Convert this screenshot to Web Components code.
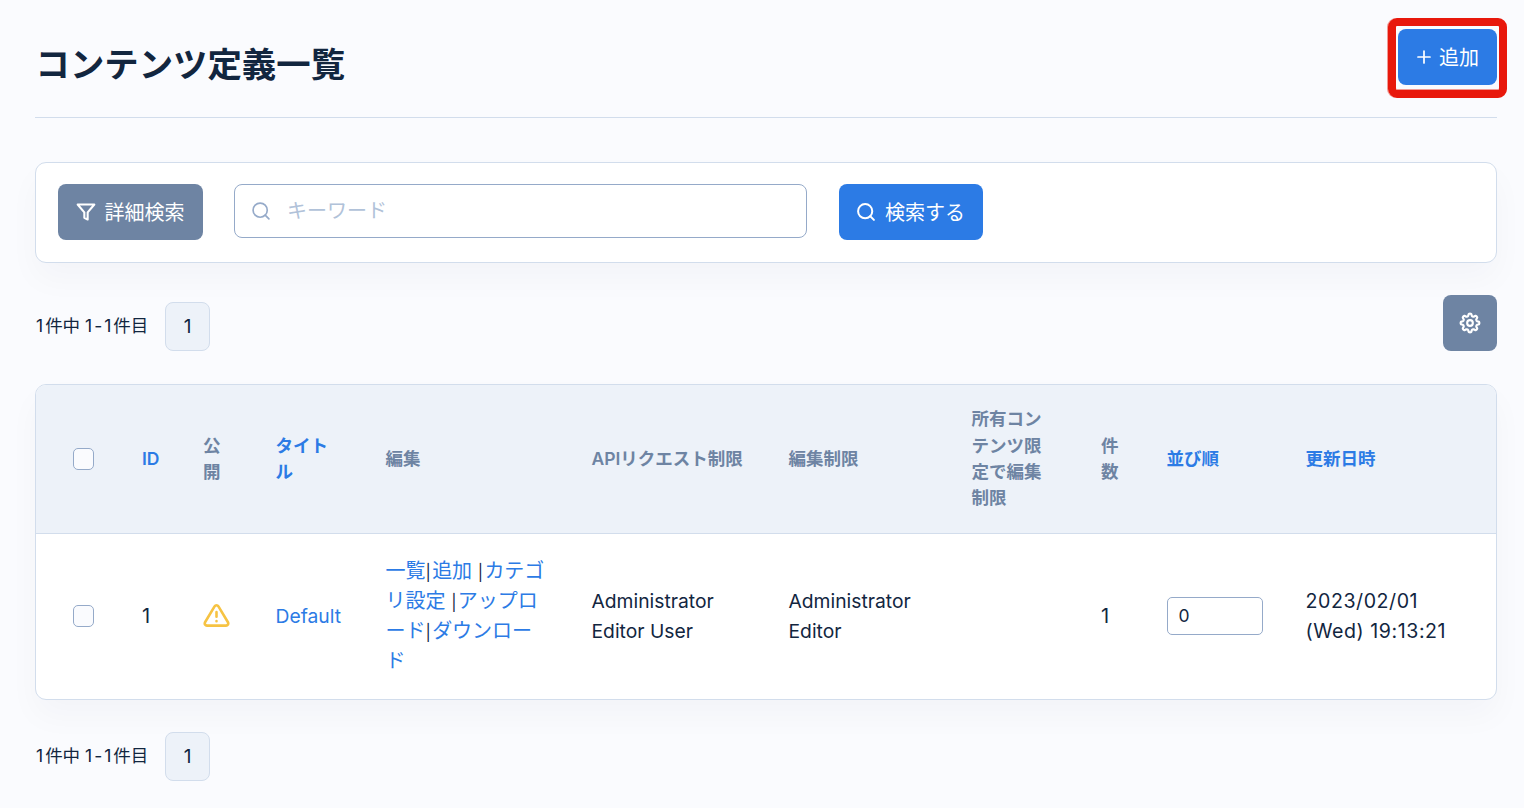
<!DOCTYPE html>
<html lang="ja">
<head>
<meta charset="utf-8">
<title>コンテンツ定義一覧</title>
<style>
  body {
    margin: 0;
    height: 808px;
    overflow: hidden;
    background: #fafbfe;
    color: #12263f;
    font-family: Inter, "Noto Sans CJK JP", sans-serif;
    font-size: 20px;
    line-height: 30px;
    --border: #d2ddec;
    --primary: #2c7be5;
    --secondary: #6e84a3;
  }
</style>
</head>
<body>
<content-list-page></content-list-page>

<script>
// Iconos de linea, todos sobre una caja de 24x24
const icons = {
  plus: '<path d="M12 3v18M3 12h18"/>',
  filter: '<path d="M22 3H2l8 9.46V19l4 2v-8.54z"/>',
  search: '<circle cx="11" cy="11" r="8.5"/><path d="m21.5 21.5-4.5-4.5"/>',
  alert: '<path d="M10.29 3.86 1.82 18a2 2 0 0 0 1.71 3h16.94a2 2 0 0 0 1.71-3L13.71 3.86a2 2 0 0 0-3.42 0zM12 9v4M12 17h.01"/>',
  gear: ''
};

// Contorno del engranaje: ocho dientes redondeados
(function () {
  let d = "";
  for (let i = 0; i <= 96; i++) {
    const a = i / 96 * Math.PI * 2;
    const wave = Math.tanh(2 * Math.cos(a * 8)) / Math.tanh(2);
    const r = 8.9 + 1.3 * wave;
    d += (i ? "L" : "M") + (12 + r * Math.cos(a)).toFixed(2) + " " + (12 + r * Math.sin(a)).toFixed(2);
  }
  icons.gear = `<path d="${d}z"/><circle cx="12" cy="12" r="3.1"/>`;
})();

class UiIcon extends HTMLElement {
  connectedCallback() {
    const size = this.getAttribute("size") || 20;
    const stroke = this.getAttribute("stroke") || 2;
    this.attachShadow({ mode: "open" }).innerHTML = `
      <style>
        :host { display: block; flex: none; width: ${size}px; height: ${size}px; }
        svg { display: block; width: 100%; height: 100%; fill: none; stroke: currentColor; stroke-width: ${stroke}; stroke-linecap: round; stroke-linejoin: round; }
      </style>
      <svg viewBox="0 0 24 24">${icons[this.getAttribute("name")]}</svg>`;
  }
}
customElements.define("ui-icon", UiIcon);

class UiButton extends HTMLElement {
  connectedCallback() {
    this.attachShadow({ mode: "open" }).innerHTML = `
      <style>
        :host { display: block; position: relative; flex: none; width: 144px; }
        button {
          display: flex; align-items: center; justify-content: center; gap: 9px;
          box-sizing: border-box; width: 100%; height: 56px; padding: 0 1px 0 0;
          border: 0; border-radius: 8px;
          background: var(--primary); color: #fff; font: inherit; white-space: nowrap;
        }
        ::slotted(span) { padding-top: 2px; }
        :host([kind="secondary"]) button { background: var(--secondary); }
        :host([marked]) button { gap: 7px; padding: 0; }
        :host([marked])::after {
          content: ""; position: absolute; inset: -11px -10px -13px;
          border: 8px solid #e8180c; border-radius: 9px; box-sizing: border-box;
          box-shadow: -1px 0 #f19a94, inset 0 -1px #f19a94;
        }
      </style>
      <button><slot></slot></button>`;
  }
}
customElements.define("ui-button", UiButton);

class UiCheckbox extends HTMLElement {
  connectedCallback() {
    this.attachShadow({ mode: "open" }).innerHTML = `
      <style>
        :host { display: block; }
        input {
          display: block; appearance: none; box-sizing: border-box; width: 21px; height: 22px; margin: 0;
          border: 1px solid #95aac9; border-radius: 5px; background: #fafbfe;
        }
      </style>
      <input type="checkbox">`;
  }
}
customElements.define("ui-checkbox", UiCheckbox);

class SearchPanel extends HTMLElement {
  connectedCallback() {
    this.attachShadow({ mode: "open" }).innerHTML = `
      <style>
        :host {
          display: flex; align-items: flex-start; box-sizing: border-box; height: 101px; padding: 21px 22px;
          border: 1px solid var(--border); border-radius: 11px; background: #fff;
          box-shadow: 0 16px 32px rgba(18, 38, 63, .03);
        }
        .keyword {
          display: flex; align-items: center; gap: 16px; box-sizing: border-box;
          width: 573px; height: 54px; margin: 0 32px 0 31px; padding-left: 16px;
          border: 1px solid #95aac9; border-radius: 8px; color: #95aac9;
        }
        input { flex: 1; min-width: 0; height: 30px; padding: 0; border: 0; outline: 0; background: none; font: inherit; }
        input::placeholder { color: #b1c2d9; opacity: 1; }
      </style>
      <ui-button kind="secondary" style="width: 145px"><ui-icon name="filter" stroke="2.5"></ui-icon><span>詳細検索</span></ui-button>
      <div class="keyword"><ui-icon name="search"></ui-icon><input placeholder="キーワード"></div>
      <ui-button><ui-icon name="search" stroke="2.4"></ui-icon><span>検索する</span></ui-button>`;
  }
}
customElements.define("search-panel", SearchPanel);

class PageCounter extends HTMLElement {
  connectedCallback() {
    this.attachShadow({ mode: "open" }).innerHTML = `
      <style>
        :host { display: flex; align-items: center; height: 49px; }
        .count { box-sizing: border-box; width: 130px; padding: 0 0 1px 1px; font-size: 17.5px; white-space: nowrap; }
        .num { letter-spacing: 2px; }
        .page {
          display: flex; align-items: center; justify-content: center; box-sizing: border-box;
          width: 45px; height: 49px; border: 1px solid var(--border); border-radius: 8px;
          background: #edf2f9; font-size: 19px;
        }
      </style>
      <span class="count"><span class="num">1</span>件中 <span class="num">1-1</span>件目</span>
      <span class="page">1</span>`;
  }
}
customElements.define("page-counter", PageCounter);

class ContentTable extends HTMLElement {
  connectedCallback() {
    this.attachShadow({ mode: "open" }).innerHTML = `
      <style>
        :host {
          display: block; box-sizing: border-box; height: 316px; overflow: hidden;
          border: 1px solid var(--border); border-radius: 11px; background: #fff;
          box-shadow: 0 16px 32px rgba(18, 38, 63, .03);
        }
        .row {
          display: grid; align-items: center; box-sizing: border-box; padding-left: 37px;
          grid-template-columns: 69px 61px 72.5px 110px 206px 197px 183px 129.5px 65.5px 139px 1fr;
        }
        .row > * { white-space: nowrap; }
        .head {
          height: 149px; border-bottom: 1px solid var(--border); background: #edf2f9;
          color: var(--secondary); font-size: 17.5px; line-height: 26.4px; font-weight: 600;
        }
        .body { height: 163px; }
        .sort, a { color: var(--primary); text-decoration: none; }
        .warn { color: #f6c343; }
        .latin { font-size: 19.3px; }
        .date { font-size: 19.6px; letter-spacing: .55px; }
        i { font-style: normal; font-size: 16px; line-height: 0; letter-spacing: 1.3px; }
        .order {
          box-sizing: border-box; width: 96px; height: 38px; padding: 0 11px; color: inherit;
          border: 1px solid #95aac9; border-radius: 5px; background: #fff; font: inherit; font-size: 17.5px;
        }
      </style>
      <div class="row head">
        <ui-checkbox></ui-checkbox>
        <span class="sort">ID</span>
        <span>公<br>開</span>
        <span class="sort">タイト<br>ル</span>
        <span>編集</span>
        <span>APIリクエスト制限</span>
        <span>編集制限</span>
        <span>所有コン<br>テンツ限<br>定で編集<br>制限</span>
        <span>件<br>数</span>
        <span class="sort">並び順</span>
        <span class="sort">更新日時</span>
      </div>
      <div class="row body">
        <ui-checkbox></ui-checkbox>
        <span>1</span>
        <ui-icon class="warn" name="alert" size="27" stroke="2.3"></ui-icon>
        <a class="latin">Default</a>
        <span><a>一覧</a><i>|</i><a>追加</a> <i>|</i><a>カテゴ<br>リ設定</a> <i>|</i><a>アップロ<br>ード</a><i>|</i><a>ダウンロー<br>ド</a></span>
        <span class="latin">Administrator<br>Editor User</span>
        <span class="latin">Administrator<br>Editor</span>
        <span></span>
        <span>1</span>
        <input class="order" value="0">
        <span class="date">2023/02/01<br>(Wed) 19:13:21</span>
      </div>`;
  }
}
customElements.define("content-table", ContentTable);

class ContentListPage extends HTMLElement {
  connectedCallback() {
    this.attachShadow({ mode: "open" }).innerHTML = `
      <style>
        :host { display: block; padding: 0 27px 0 35px; }
        header {
          display: flex; justify-content: space-between; align-items: flex-start; box-sizing: border-box;
          height: 118px; padding-top: 29px; margin-bottom: 44px; border-bottom: 1px solid var(--border);
        }
        h1 { margin: 13px 0 0 .5px; font-size: 34.4px; line-height: 46px; font-weight: 600; }
        .tools { display: flex; justify-content: space-between; align-items: flex-start; height: 56px; margin: 32px 0 33px; }
        .tools page-counter { margin-top: 7px; }
        .bottom { margin-top: 32px; }
      </style>
      <header>
        <h1>コンテンツ定義一覧</h1>
        <ui-button marked style="width: 99px"><ui-icon name="plus" size="16" stroke="2.6"></ui-icon><span>追加</span></ui-button>
      </header>
      <search-panel></search-panel>
      <div class="tools">
        <page-counter></page-counter>
        <ui-button kind="secondary" style="width: 54px"><ui-icon name="gear" size="22" stroke="2.3"></ui-icon></ui-button>
      </div>
      <content-table></content-table>
      <page-counter class="bottom"></page-counter>`;
  }
}
customElements.define("content-list-page", ContentListPage);
</script>
</body>
</html>
